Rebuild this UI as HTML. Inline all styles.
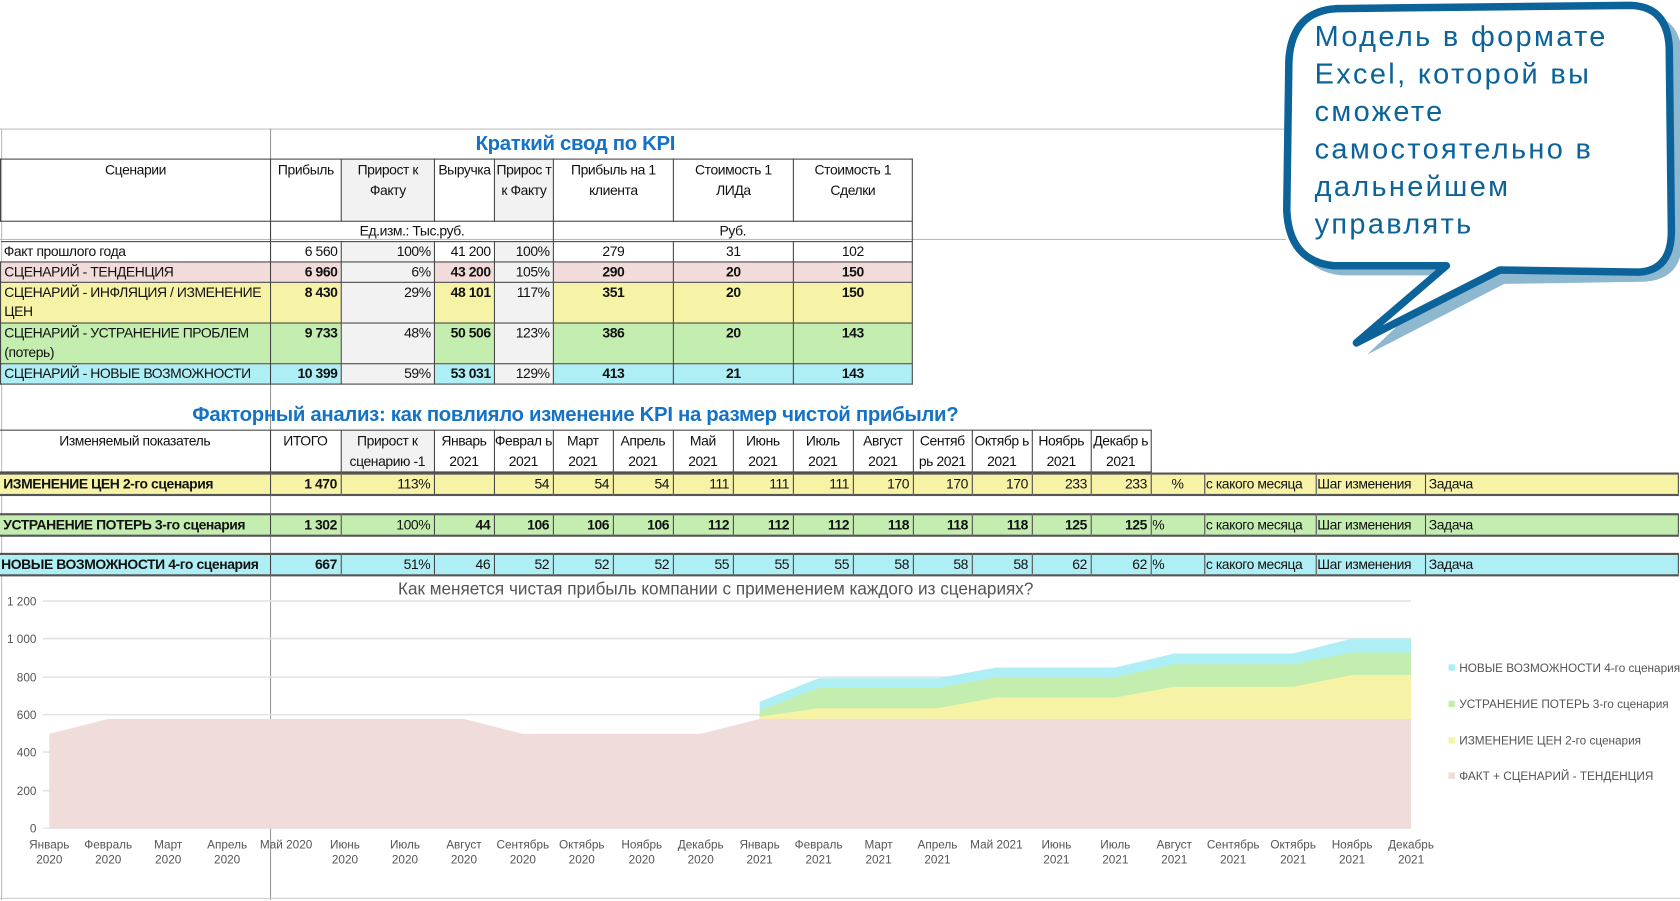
<!DOCTYPE html>
<html><head><meta charset="utf-8"><style>
body{margin:0;width:1680px;height:901px;background:#fff;position:relative;overflow:hidden;font-family:"Liberation Sans",sans-serif;color:#111}
#w{position:absolute;left:0;top:0;width:1568px;height:841px;transform:scale(1.0714);transform-origin:0 0}
.a{position:absolute}
table{border-collapse:collapse;table-layout:fixed;position:absolute;font-size:13px;letter-spacing:-0.4px}
td{border:1px solid #444;padding:0 3px;line-height:18px;height:18px;white-space:nowrap;overflow:hidden;vertical-align:top}
.r{text-align:right}.c{text-align:center}.b{font-weight:bold}.g{background:#f2f2f2}
.pk td{background:#f2dcdb}.yl td{background:#f7f3a6}.gr td{background:#c4eeb0}.cy td{background:#aeeef5}
.pk td.g,.yl td.g,.gr td.g,.cy td.g{background:#f2f2f2}
.h td{vertical-align:top;text-align:center;white-space:normal;line-height:19px}
.t{color:#1572c4;font-weight:bold;font-size:19px;letter-spacing:-0.3px}
.fr td{border-top:2px solid #555;border-bottom:2px solid #555}
</style></head><body><div id="w">
<div class="a" style="left:0;top:120px;width:1200px;height:1px;background:#bbb"></div>
<div class="a" style="left:0;top:223px;width:1200px;height:1px;background:#bbb"></div>
<div class="a" style="left:1px;top:120px;width:1px;height:720px;background:#bbb"></div>
<div class="a" style="left:252px;top:120px;width:1px;height:720px;background:#999"></div>
<div class="a" style="left:0;top:838px;width:1680px;height:1px;background:#ccc"></div>
<div class="a t" style="left:252px;top:124px;width:570px;text-align:center">Краткий свод по KPI</div>

<table style="left:0;top:148px;width:851px">
<colgroup><col style="width:252px"><col style="width:66px"><col style="width:87px"><col style="width:56px"><col style="width:55px"><col style="width:112px"><col style="width:112px"><col style="width:111px"></colgroup>
<tr class="h"><td style="height:57px">Сценарии</td><td>Прибыль</td><td class="g">Прирост к Факту</td><td style="padding:0">Выручка</td><td class="g" style="padding:0">Прирос т к Факту</td><td>Прибыль на 1 клиента</td><td>Стоимость 1 ЛИДа</td><td>Стоимость 1 Сделки</td></tr>
<tr><td style="border-left:0;border-bottom:0"></td><td colspan="4" class="c">Ед.изм.: Тыс.руб.</td><td colspan="3" class="c">Руб.</td></tr>
<tr><td style="border-left:0">Факт прошлого года</td><td class="r">6 560</td><td class="r g">100%</td><td class="r">41 200</td><td class="r g">100%</td><td class="c">279</td><td class="c">31</td><td class="c">102</td></tr>
<tr class="pk"><td>СЦЕНАРИЙ - ТЕНДЕНЦИЯ</td><td class="r b">6 960</td><td class="r g">6%</td><td class="r b">43 200</td><td class="r g">105%</td><td class="c b">290</td><td class="c b">20</td><td class="c b">150</td></tr>
<tr class="yl"><td style="height:37px;white-space:normal">СЦЕНАРИЙ - ИНФЛЯЦИЯ / ИЗМЕНЕНИЕ ЦЕН</td><td class="r b">8 430</td><td class="r g">29%</td><td class="r b">48 101</td><td class="r g">117%</td><td class="c b">351</td><td class="c b">20</td><td class="c b">150</td></tr>
<tr class="gr"><td style="height:37px;white-space:normal">СЦЕНАРИЙ - УСТРАНЕНИЕ ПРОБЛЕМ (потерь)</td><td class="r b">9 733</td><td class="r g">48%</td><td class="r b">50 506</td><td class="r g">123%</td><td class="c b">386</td><td class="c b">20</td><td class="c b">143</td></tr>
<tr class="cy"><td>СЦЕНАРИЙ - НОВЫЕ ВОЗМОЖНОСТИ</td><td class="r b">10 399</td><td class="r g">59%</td><td class="r b">53 031</td><td class="r g">129%</td><td class="c b">413</td><td class="c b">21</td><td class="c b">143</td></tr>
</table>

<div class="a t" style="left:0;top:377px;width:1074px;text-align:center">Факторный анализ: как повлияло изменение KPI на размер чистой прибыли?</div>

<table style="left:0;top:401px;width:1074px">
<colgroup><col style="width:252px"><col style="width:66px"><col style="width:87px"><col style="width:56px"><col style="width:55px"><col style="width:56px"><col style="width:56px"><col style="width:56px"><col style="width:56px"><col style="width:56px"><col style="width:56px"><col style="width:55px"><col style="width:56px"><col style="width:55px"><col style="width:56px"></colgroup>
<tr class="h"><td style="height:38px;border-left:0">Изменяемый показатель</td><td>ИТОГО</td><td class="g">Прирост к сценарию -1</td><td style="padding:0">Январь 2021</td><td style="padding:0">Феврал ь 2021</td><td>Март 2021</td><td>Апрель 2021</td><td>Май 2021</td><td>Июнь 2021</td><td>Июль 2021</td><td>Август 2021</td><td style="padding:0">Сентяб рь 2021</td><td style="padding:0">Октябр ь 2021</td><td style="padding:0">Ноябрь 2021</td><td style="padding:0">Декабр ь 2021</td></tr>
</table>

<table style="left:0;top:441px;width:1566px" class="fr">
<colgroup><col style="width:252px"><col style="width:66px"><col style="width:87px"><col style="width:56px"><col style="width:55px"><col style="width:56px"><col style="width:56px"><col style="width:56px"><col style="width:56px"><col style="width:56px"><col style="width:56px"><col style="width:55px"><col style="width:56px"><col style="width:55px"><col style="width:56px"><col style="width:50px"><col style="width:104px"><col style="width:102px"><col style="width:236px"></colgroup>
<tr class="yl"><td class="b" style="border-left:0">ИЗМЕНЕНИЕ ЦЕН 2-го сценария</td><td class="r b">1 470</td><td class="r">113%</td><td></td><td class="r">54</td><td class="r">54</td><td class="r">54</td><td class="r">111</td><td class="r">111</td><td class="r">111</td><td class="r">170</td><td class="r">170</td><td class="r">170</td><td class="r">233</td><td class="r">233</td><td class="c">%</td><td style="padding:0 1px">с какого месяца</td><td style="padding:0 1px">Шаг изменения</td><td>Задача</td></tr>
</table>
<table style="left:0;top:479px;width:1566px" class="fr">
<colgroup><col style="width:252px"><col style="width:66px"><col style="width:87px"><col style="width:56px"><col style="width:55px"><col style="width:56px"><col style="width:56px"><col style="width:56px"><col style="width:56px"><col style="width:56px"><col style="width:56px"><col style="width:55px"><col style="width:56px"><col style="width:55px"><col style="width:56px"><col style="width:50px"><col style="width:104px"><col style="width:102px"><col style="width:236px"></colgroup>
<tr class="gr"><td class="b" style="border-left:0">УСТРАНЕНИЕ ПОТЕРЬ 3-го сценария</td><td class="r b">1 302</td><td class="r">100%</td><td class="r b">44</td><td class="r b">106</td><td class="r b">106</td><td class="r b">106</td><td class="r b">112</td><td class="r b">112</td><td class="r b">112</td><td class="r b">118</td><td class="r b">118</td><td class="r b">118</td><td class="r b">125</td><td class="r b">125</td><td style="padding:0 1px">%</td><td style="padding:0 1px">с какого месяца</td><td style="padding:0 1px">Шаг изменения</td><td>Задача</td></tr>
</table>
<table style="left:0;top:516px;width:1566px" class="fr">
<colgroup><col style="width:252px"><col style="width:66px"><col style="width:87px"><col style="width:56px"><col style="width:55px"><col style="width:56px"><col style="width:56px"><col style="width:56px"><col style="width:56px"><col style="width:56px"><col style="width:56px"><col style="width:55px"><col style="width:56px"><col style="width:55px"><col style="width:56px"><col style="width:50px"><col style="width:104px"><col style="width:102px"><col style="width:236px"></colgroup>
<tr class="cy"><td class="b" style="border-left:0;padding:0 1px">НОВЫЕ ВОЗМОЖНОСТИ 4-го сценария</td><td class="r b">667</td><td class="r">51%</td><td class="r">46</td><td class="r">52</td><td class="r">52</td><td class="r">52</td><td class="r">55</td><td class="r">55</td><td class="r">55</td><td class="r">58</td><td class="r">58</td><td class="r">58</td><td class="r">62</td><td class="r">62</td><td style="padding:0 1px">%</td><td style="padding:0 1px">с какого месяца</td><td style="padding:0 1px">Шаг изменения</td><td>Задача</td></tr>
</table>

<svg class="a" style="left:0;top:0" width="1568" height="841" font-family="Liberation Sans,sans-serif">
<text x="668" y="555" text-anchor="middle" font-size="16" fill="#555">Как меняется чистая прибыль компании с применением каждого из сценариях?</text>
<g stroke="#e2e2e2" stroke-width="1.5">
<line x1="40" y1="561" x2="1317" y2="561"/><line x1="40" y1="596" x2="1317" y2="596"/><line x1="40" y1="632" x2="1317" y2="632"/><line x1="40" y1="667" x2="1317" y2="667"/><line x1="40" y1="702" x2="1317" y2="702"/><line x1="40" y1="738" x2="1317" y2="738"/></g>
<g font-size="11" fill="#555" text-anchor="end">
<text x="34" y="565">1 200</text><text x="34" y="600">1 000</text><text x="34" y="636">800</text><text x="34" y="671">600</text><text x="34" y="706">400</text><text x="34" y="742">200</text><text x="34" y="777">0</text></g>
<polygon fill="#aeeef5" points="709,773 709,655 764,633 820,633 875,633 930,623 986,623 1041,623 1096,610 1151,610 1207,610 1262,596 1317,596 1317,773"/>
<polygon fill="#c4eeb0" points="709,773 709,663 764,642 820,642 875,642 930,632 986,632 1041,632 1096,620 1151,620 1207,620 1262,609 1317,609 1317,773"/>
<polygon fill="#f7f3a6" points="709,773 709,669 764,661 820,661 875,661 930,651 986,651 1041,651 1096,641 1151,641 1207,641 1262,630 1317,630 1317,773"/>
<polygon fill="#f1dcdc" points="46,773 46,685 101,671 157,671 212,671 267,671 322,671 378,671 433,671 488,685 543,685 599,685 654,685 709,671 1317,671 1317,773"/>
<line x1="40" y1="773" x2="1317" y2="773" stroke="#ddd"/>
<g font-size="11" fill="#555" text-anchor="middle">
<text x="46" y="792">Январь</text><text x="46" y="806">2020</text>
<text x="101" y="792">Февраль</text><text x="101" y="806">2020</text>
<text x="157" y="792">Март</text><text x="157" y="806">2020</text>
<text x="212" y="792">Апрель</text><text x="212" y="806">2020</text>
<text x="267" y="792">Май 2020</text>
<text x="322" y="792">Июнь</text><text x="322" y="806">2020</text>
<text x="378" y="792">Июль</text><text x="378" y="806">2020</text>
<text x="433" y="792">Август</text><text x="433" y="806">2020</text>
<text x="488" y="792">Сентябрь</text><text x="488" y="806">2020</text>
<text x="543" y="792">Октябрь</text><text x="543" y="806">2020</text>
<text x="599" y="792">Ноябрь</text><text x="599" y="806">2020</text>
<text x="654" y="792">Декабрь</text><text x="654" y="806">2020</text>
<text x="709" y="792">Январь</text><text x="709" y="806">2021</text>
<text x="764" y="792">Февраль</text><text x="764" y="806">2021</text>
<text x="820" y="792">Март</text><text x="820" y="806">2021</text>
<text x="875" y="792">Апрель</text><text x="875" y="806">2021</text>
<text x="930" y="792">Май 2021</text>
<text x="986" y="792">Июнь</text><text x="986" y="806">2021</text>
<text x="1041" y="792">Июль</text><text x="1041" y="806">2021</text>
<text x="1096" y="792">Август</text><text x="1096" y="806">2021</text>
<text x="1151" y="792">Сентябрь</text><text x="1151" y="806">2021</text>
<text x="1207" y="792">Октябрь</text><text x="1207" y="806">2021</text>
<text x="1262" y="792">Ноябрь</text><text x="1262" y="806">2021</text>
<text x="1317" y="792">Декабрь</text><text x="1317" y="806">2021</text></g>
<g font-size="11" fill="#555">
<rect x="1352" y="620" width="6" height="6" fill="#aeeef5"/><text x="1362" y="627">НОВЫЕ ВОЗМОЖНОСТИ 4-го сценария</text>
<rect x="1352" y="654" width="6" height="6" fill="#c4eeb0"/><text x="1362" y="661">УСТРАНЕНИЕ ПОТЕРЬ 3-го сценария</text>
<rect x="1352" y="688" width="6" height="6" fill="#f7f3a6"/><text x="1362" y="695">ИЗМЕНЕНИЕ ЦЕН 2-го сценария</text>
<rect x="1352" y="721" width="6" height="6" fill="#f1dcdc"/><text x="1362" y="728">ФАКТ + СЦЕНАРИЙ - ТЕНДЕНЦИЯ</text></g>
<path d="M1248,12 Q1210,14 1206,60 L1204,200 Q1206,248 1248,252 L1350,252 L1272,326 L1400,260 L1530,258 Q1566,256 1566,220 L1566,50 Q1566,10 1530,8 Z" fill="#8db8d0" transform="translate(4,5)"/>
<path d="M1248,8 Q1206,10 1203,56 L1201,196 Q1203,244 1245,248 L1350,248 L1266,320 L1400,252 L1530,254 Q1560,252 1560,216 L1558,44 Q1556,6 1522,5 Z" fill="#fff" stroke="#0b6399" stroke-width="7" stroke-linejoin="round"/>
<g font-size="27" fill="#0b6399" letter-spacing="2.2">
<text x="1227" y="43">Модель в формате</text><text x="1227" y="78">Excel, которой вы</text><text x="1227" y="113">сможете</text><text x="1227" y="148">самостоятельно в</text><text x="1227" y="183">дальнейшем</text><text x="1227" y="218">управлять</text></g>
</svg>
</div></body></html>
